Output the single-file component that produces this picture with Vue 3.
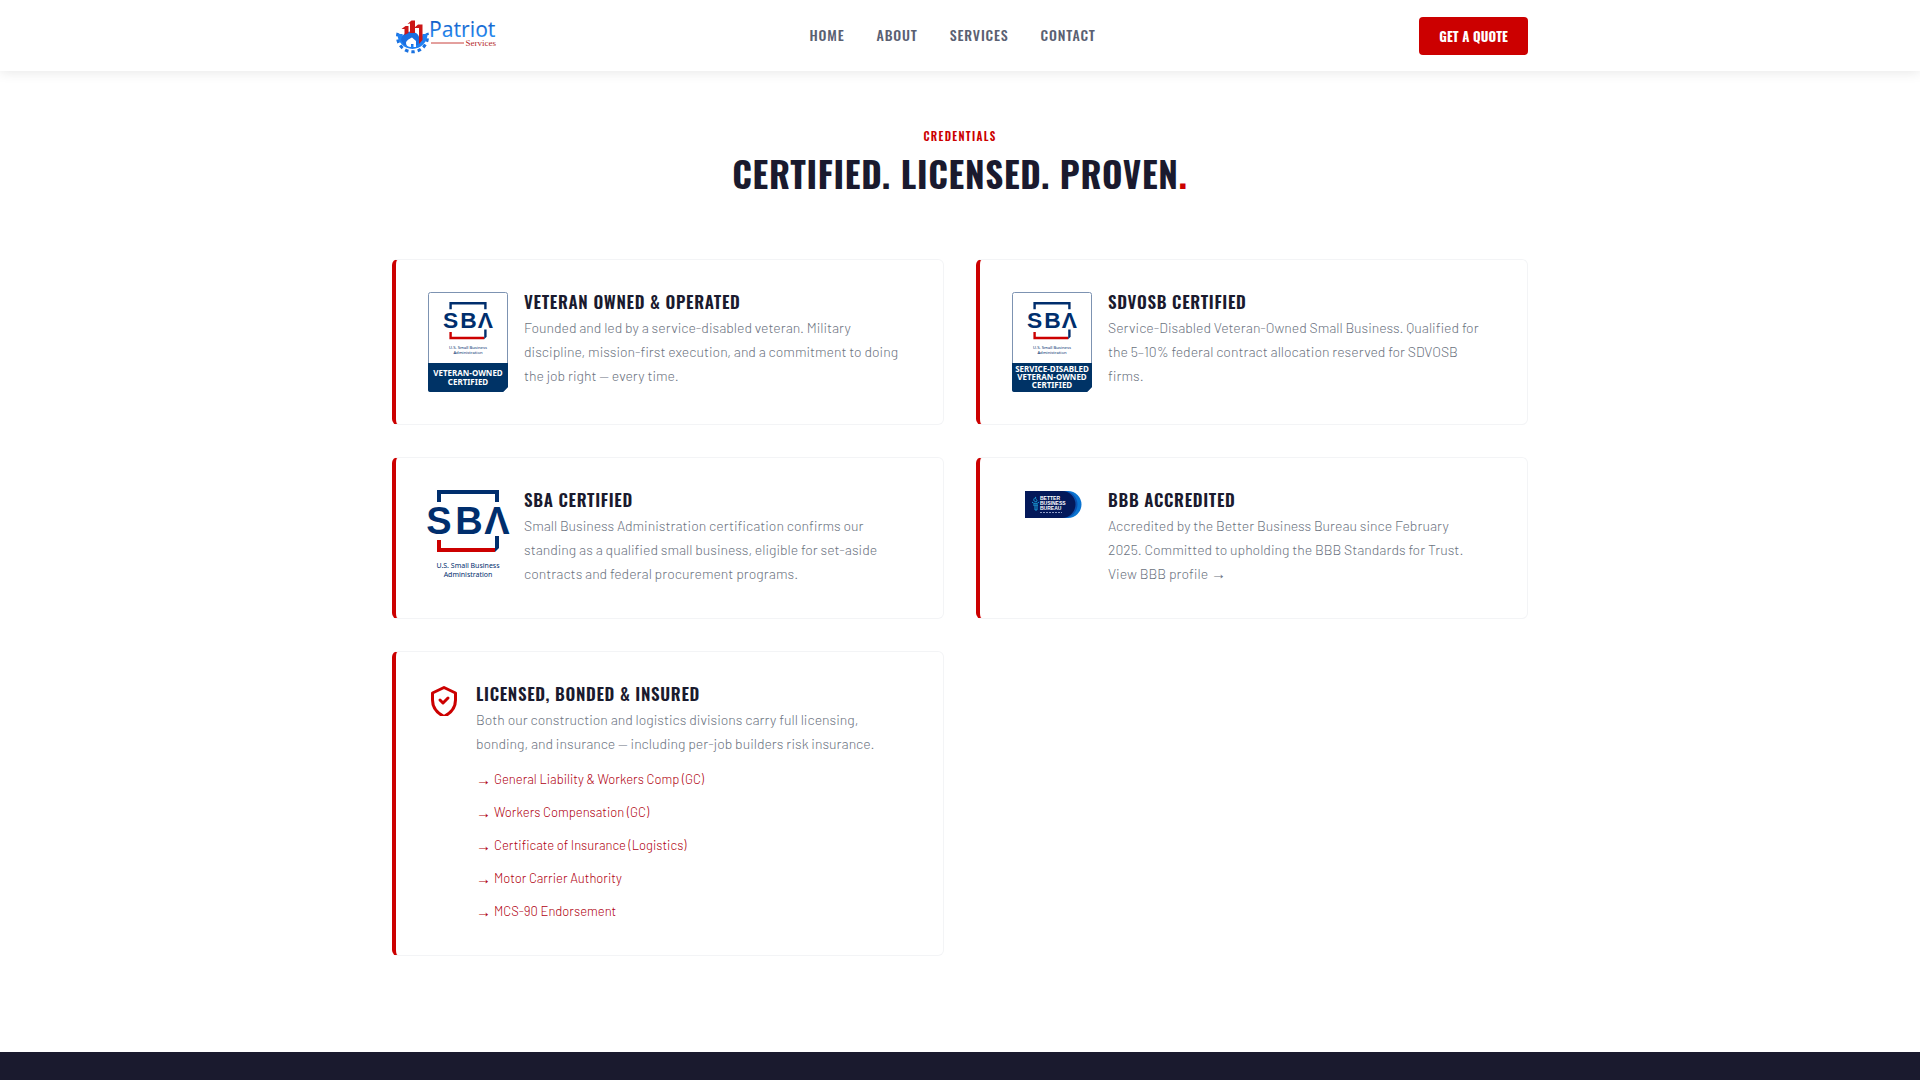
<template>
  <div class="page">

    <!-- Top navigation -->
    <header class="site-header">
      <div class="container nav-bar">
        <a href="#" class="brand" aria-label="Patriot Services">
          <svg width="106" height="40" viewBox="0 0 106 40">
            <defs>
              <linearGradient id="brandBlue" x1="0" y1="0" x2="0" y2="1">
                <stop offset="0" stop-color="#0a4fb8" />
                <stop offset="1" stop-color="#2f9bff" />
              </linearGradient>
            </defs>
            <path d="M6 17a15 15 0 1 0 29 0" fill="none" stroke="#1a72e0" stroke-width="3" stroke-dasharray="3.500 3" />
            <path d="M8 18a12.500 12.500 0 1 0 25 0" fill="none" stroke="#1f80f2" stroke-width="5" />
            <path d="M9 24c1-7 8-11 15-7 4 2 4 8 2 12H12z" fill="#1a6ee0" />
            <path d="M9.500 13l4-3h3v7l-4 2v-6zM15.500 8l4-3.500H23V17h-5V7.500zM22 12l4-3.500h4.500V24L27 28V12z" fill="#cc1717" />
            <path d="M14 27c0-2 3-4 6-5.500l4 3.500v6h-2.500v-3H19v3c-3 0-5-1.500-5-4z" fill="#fff" />
            <text x="37" y="21" class="brand-name" fill="url(#brandBlue)">Patriot</text>
            <path d="M39 27h33" stroke="#c8403c" stroke-width="1" />
            <text x="104" y="30" class="brand-sub">Services</text>
          </svg>
        </a>

        <nav class="nav-links">
          <a v-for="item in NAV" :key="item" href="#">{{ item }}</a>
        </nav>

        <button type="button" class="btn-quote">Get a Quote</button>
      </div>
    </header>

    <!-- Credentials -->
    <main class="credentials">
      <div class="container">
        <div class="section-head">
          <p class="eyebrow">Credentials</p>
          <h2>Certified. Licensed. Proven<span>.</span></h2>
        </div>

        <div class="cred-grid">
          <article v-for="c in CREDENTIALS" :key="c.title" class="cred-card">

            <svg v-if="c.badge" class="cred-media" width="80" height="100" viewBox="0 0 80 100">
              <path d="M2.500 .5h75a2 2 0 0 1 2 2V95l-4 4.500H2.500a2 2 0 0 1-2-2v-95a2 2 0 0 1 2-2z" fill="#fff" stroke="#7d93b2" />
              <path d="M0 71h80v24l-5 5H2a2 2 0 0 1-2-2z" fill="#003366" />
              <g transform="translate(16 10) scale(.6)">
                <path d="M9 12V0h62v12h-4V4H13v8z" fill="#002e6d" />
                <text x="11" y="44" class="sba">S</text>
                <text x="41" y="44" class="sba">B</text>
                <text x="69" y="44" class="sba">Λ</text>
                <path d="M9 50h4v8h54v4H9z" fill="#cc0000" />
                <path d="M67 46h4v12l-4 4z" fill="#002e6d" />
                <text x="40" y="78" class="sba-sub">U.S. Small Business</text>
                <text x="40" y="87" class="sba-sub">Administration</text>
              </g>
              <text
                v-for="(line, i) in c.badge" :key="line"
                x="40" :y="c.badge.length === 2 ? 84 + i * 9 : 80 + i * 8"
                class="badge-line"
              >{{ line }}</text>
            </svg>

            <svg v-else-if="c.logo === 'sba'" class="cred-media" width="80" height="90" viewBox="0 0 80 90">
              <path d="M9 12V0h62v12h-4V4H13v8z" fill="#002e6d" />
              <text x="11" y="44" class="sba">S</text>
              <text x="41" y="44" class="sba">B</text>
              <text x="69" y="44" class="sba">Λ</text>
              <path d="M9 50h4v8h54v4H9z" fill="#cc0000" />
              <path d="M67 46h4v12l-4 4z" fill="#002e6d" />
              <text x="40" y="78" class="sba-sub">U.S. Small Business</text>
              <text x="40" y="87" class="sba-sub">Administration</text>
            </svg>

            <svg v-else-if="c.logo === 'bbb'" class="cred-media" width="80" height="30" viewBox="0 0 80 30">
              <path d="M45 1h11a13.500 13.500 0 0 1 0 27H45z" fill="#0b74d1" />
              <path d="M45 1h7a13.500 13.500 0 0 1 0 27h-7z" fill="#0a50ae" />
              <path d="M13 1h37a13.500 13.500 0 0 1 0 27H13z" fill="#04195a" />
              <path d="M24 7c-2 2 3 3 0 5-3-1-3-3 0-5zM20 12c1 2 6 2 7 0M21 15h5M23 15v5h2v-5" fill="none" stroke="#199bd8" stroke-width="1" />
              <text x="28" y="10" class="bbb">BETTER</text>
              <text x="28" y="15" class="bbb">BUSINESS</text>
              <text x="28" y="20" class="bbb">BUREAU</text>
              <path d="M28 22.500h22" stroke="#8d9ac4" stroke-width="1" stroke-dasharray="2 1" />
            </svg>

            <svg v-else class="cred-media shield" width="32" height="32" viewBox="0 0 32 32">
              <path d="M16 3.500L27.500 9v7c0 8-4.500 13-11.500 16.500C9 29 4.500 24 4.500 16V9z" />
              <path d="M12 16l3 3 5-5" />
            </svg>

            <div class="cred-body">
              <h3>{{ c.title }}</h3>
              <p>{{ c.text }} <a v-if="c.link" href="#">{{ c.link }} <span class="arrow">→</span></a></p>
              <ul v-if="c.docs">
                <li v-for="d in c.docs" :key="d"><a href="#"><span class="arrow">→</span>{{ d }}</a></li>
              </ul>
            </div>
          </article>
        </div>
      </div>
    </main>

    <footer class="site-footer"></footer>
  </div>
</template>

<script setup>
const NAV = ['Home', 'About', 'Services', 'Contact']

const CREDENTIALS = [
  {
    title: 'Veteran Owned & Operated',
    text: 'Founded and led by a service-disabled veteran. Military discipline, mission-first execution, and a commitment to doing the job right — every time.',
    badge: ['VETERAN-OWNED', 'CERTIFIED'],
  },
  {
    title: 'SDVOSB Certified',
    text: 'Service-Disabled Veteran-Owned Small Business. Qualified for the 5–10% federal contract allocation reserved for SDVOSB firms.',
    badge: ['SERVICE-DISABLED', 'VETERAN-OWNED', 'CERTIFIED'],
  },
  {
    title: 'SBA Certified',
    text: 'Small Business Administration certification confirms our standing as a qualified small business, eligible for set-aside contracts and federal procurement programs.',
    logo: 'sba',
  },
  {
    title: 'BBB Accredited',
    text: 'Accredited by the Better Business Bureau since February\n2025. Committed to upholding the BBB Standards for Trust.\n',
    link: 'View BBB profile',
    logo: 'bbb',
  },
  {
    title: 'Licensed, Bonded & Insured',
    text: 'Both our construction and logistics divisions carry full licensing, bonding, and insurance — including per-job builders risk insurance.',
    docs: [
      'General Liability & Workers Comp (GC)',
      'Workers Compensation (GC)',
      'Certificate of Insurance (Logistics)',
      'Motor Carrier Authority',
      'MCS-90 Endorsement',
    ],
  },
]
</script>

<style>
body { margin: 0; background: #fff; }
</style>

<style scoped>
.page {
  --red: #cc0000;
  --ink: #1a1a2e;
  --muted: #6b7280;
  --display: Oswald, "Roboto Condensed", "Liberation Sans Narrow", "Liberation Sans", sans-serif;
  min-height: 100vh;
  display: flex;
  flex-direction: column;
  font-family: Barlow, Roboto, sans-serif;
  color: var(--ink);
}
.container { max-width: 1136px; margin: 0 auto; padding: 0 32px; }
a { color: inherit; text-decoration: none; }

/* Header */
.site-header { background: #fff; box-shadow: 0 1px 12px rgba(0,0,0,0.1); }
.nav-bar { display: flex; align-items: center; justify-content: space-between; height: 71px; }
.brand { display: flex; }
.brand-name { font: 21px "Noto Sans", sans-serif; }
.brand-sub { font: 9px "Liberation Serif", serif; fill: #b52a2a; text-anchor: end; }
.nav-links { display: flex; gap: 32px; margin-right: 12px; font-family: var(--display); }
.nav-links a {
  border-bottom: 2px solid transparent;
  font-size: 14px;
  font-weight: 500;
  letter-spacing: 0.06em;
  text-transform: uppercase;
  color: #5a6072;
}
.nav-links a:hover { border-bottom-color: var(--red); }
.btn-quote {
  border: none;
  border-radius: 4px;
  background: var(--red);
  color: #fff;
  height: 38px;
  padding: 0 20px;
  font-family: var(--display);
  font-size: 13px;
  font-weight: 700;
  letter-spacing: 0.01em;
  text-transform: uppercase;
  cursor: pointer;
}

/* Section heading */
.credentials { padding: 56px 0 96px; }
.section-head { text-align: center; margin-bottom: 64px; font-family: var(--display); text-transform: uppercase; }
.eyebrow { margin: 0 0 6px; font-size: 11px; line-height: 18px; font-weight: 600; letter-spacing: 0.12em; color: var(--red); }
h2 { margin: 0; font-size: 35px; line-height: 44px; font-weight: 700; letter-spacing: 0.02em; }
h2 span { color: var(--red); }

/* Cards */
.cred-grid { display: grid; grid-template-columns: repeat(2, 1fr); gap: 32px; }
.cred-card {
  display: flex;
  align-items: flex-start;
  gap: 16px;
  padding: 32px;
  border: 1px solid #f3f4f6;
  border-left: 4px solid var(--red);
  border-radius: 6px;
  background: #fff;
}
.cred-media { flex-shrink: 0; overflow: visible; }
.cred-body { flex: 1; }
h3 {
  margin: 0 0 4px;
  font-family: var(--display);
  font-size: 17px;
  line-height: 20px;
  font-weight: 600;
  letter-spacing: 0.04em;
  text-transform: uppercase;
}
.cred-body p { margin: 0; font-size: 14px; line-height: 24px; font-weight: 300; color: var(--muted); white-space: pre-line; }
.arrow { font-family: "Liberation Sans", sans-serif; font-size: 15px; line-height: 1; }
ul { list-style: none; margin: 12px 0 0; padding: 0; display: flex; flex-direction: column; gap: 10px; }
li a { display: flex; align-items: center; gap: 3px; font-size: 13px; line-height: 23px; font-weight: 300; color: #b00010; }

/* Shield icon */
.shield { overflow: hidden; fill: none; stroke: var(--red); stroke-width: 3; stroke-linecap: round; stroke-linejoin: round; }

/* Logo lettering */
.sba { font: bold 38px "Liberation Sans", sans-serif; fill: #002e6d; text-anchor: middle; }
.sba-sub { font: 7px "Noto Sans", sans-serif; fill: #002e6d; text-anchor: middle; }
.badge-line { font: bold 8px "Noto Sans", sans-serif; fill: #fff; text-anchor: middle; }
.bbb { font: bold 5px "Liberation Sans", sans-serif; fill: #fff; }

.site-footer { flex: 1; min-height: 28px; background: #1a1a2e; }
</style>
